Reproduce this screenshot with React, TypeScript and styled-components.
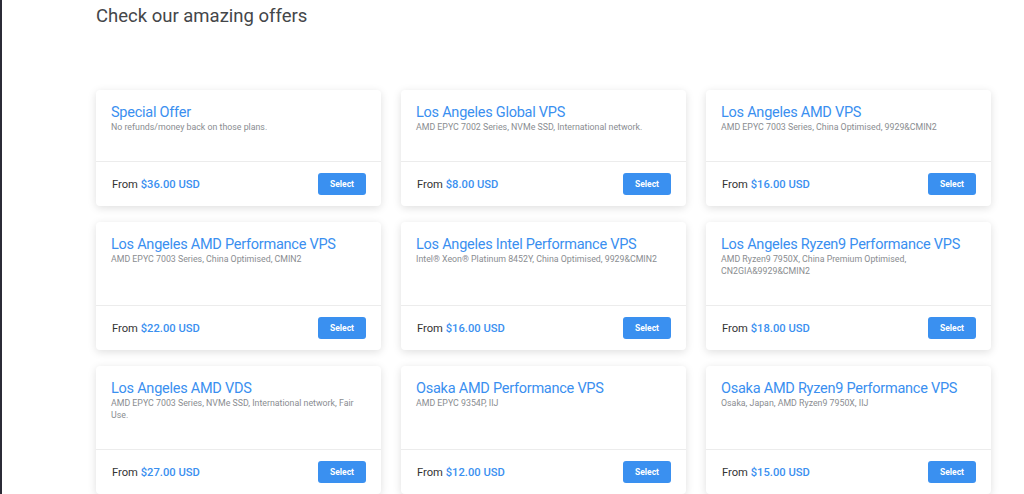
import React from "react";
import styled, { createGlobalStyle } from "styled-components";

const GlobalStyle = createGlobalStyle`
  html, body {
    margin: 0;
    padding: 0;
    background: #ffffff;
  }
  body {
    font-family: "Roboto", "Liberation Sans", sans-serif;
    overflow: hidden;
  }
`;

const Page = styled.div`
  display: flex;
  min-height: 494px;
  border-left: 2px solid #2b2b36;
`;

const Section = styled.section`
  margin-left: 94px;
  width: 895px;
`;

const Heading = styled.h2`
  margin: 0;
  padding-top: 5px;
  font-size: 18.5px;
  line-height: 22px;
  font-weight: 400;
  color: #444649;
`;

const Grid = styled.div`
  margin-top: 63px;
  display: grid;
  grid-template-columns: repeat(3, 285px);
  column-gap: 20px;
  row-gap: 16px;
`;

const Card = styled.div`
  display: flex;
  flex-direction: column;
  background: #fff;
  border-radius: 4px;
  box-shadow: 0 2px 9px rgba(0, 0, 0, 0.13);
`;

const CardHead = styled.div`
  flex: 1;
  padding: 14px 15px 28px;
  border-bottom: 1px solid #ececec;
`;

const Title = styled.div`
  font-size: 14.5px;
  line-height: 17px;
  letter-spacing: -0.25px;
  white-space: nowrap;
  color: #3a8ff0;
`;

const Desc = styled.div`
  font-size: 8.8px;
  line-height: 12px;
  color: #8a8d91;
`;

const CardFoot = styled.div`
  display: flex;
  align-items: center;
  justify-content: space-between;
  padding: 11px 15px 11px 16px;
`;

const Price = styled.div`
  font-size: 11.2px;
  color: #333;
`;

const Amount = styled.span`
  color: #3a8ff0;
  font-weight: 500;
`;

const SelectButton = styled.button`
  width: 48px;
  height: 22px;
  border: none;
  border-radius: 3px;
  background: #3a90f0;
  color: #fff;
  font-family: inherit;
  font-size: 8.5px;
  font-weight: 700;
  cursor: pointer;
`;

const offers = [
  { title: "Special Offer", desc: "No refunds/money back on those plans.", price: "$36.00 USD" },
  { title: "Los Angeles Global VPS", desc: "AMD EPYC 7002 Series, NVMe SSD, International network.", price: "$8.00 USD" },
  { title: "Los Angeles AMD VPS", desc: "AMD EPYC 7003 Series, China Optimised, 9929&CMIN2", price: "$16.00 USD" },
  { title: "Los Angeles AMD Performance VPS", desc: "AMD EPYC 7003 Series, China Optimised, CMIN2", price: "$22.00 USD" },
  { title: "Los Angeles Intel Performance VPS", desc: "Intel® Xeon® Platinum 8452Y, China Optimised, 9929&CMIN2", price: "$16.00 USD" },
  { title: "Los Angeles Ryzen9 Performance VPS", desc: "AMD Ryzen9 7950X, China Premium Optimised, CN2GIA&9929&CMIN2", price: "$18.00 USD" },
  { title: "Los Angeles AMD VDS", desc: "AMD EPYC 7003 Series, NVMe SSD, International network, Fair Use.", price: "$27.00 USD" },
  { title: "Osaka AMD Performance VPS", desc: "AMD EPYC 9354P, IIJ", price: "$12.00 USD" },
  { title: "Osaka AMD Ryzen9 Performance VPS", desc: "Osaka, Japan, AMD Ryzen9 7950X, IIJ", price: "$15.00 USD" },
];

export default function App() {
  return (
    <Page>
      <GlobalStyle />
      <Section>
        <Heading>Check our amazing offers</Heading>
        <Grid>
          {offers.map((o) => (
            <Card key={o.title}>
              <CardHead>
                <Title>{o.title}</Title>
                <Desc>{o.desc}</Desc>
              </CardHead>
              <CardFoot>
                <Price>
                  From <Amount>{o.price}</Amount>
                </Price>
                <SelectButton>Select</SelectButton>
              </CardFoot>
            </Card>
          ))}
        </Grid>
      </Section>
    </Page>
  );
}
